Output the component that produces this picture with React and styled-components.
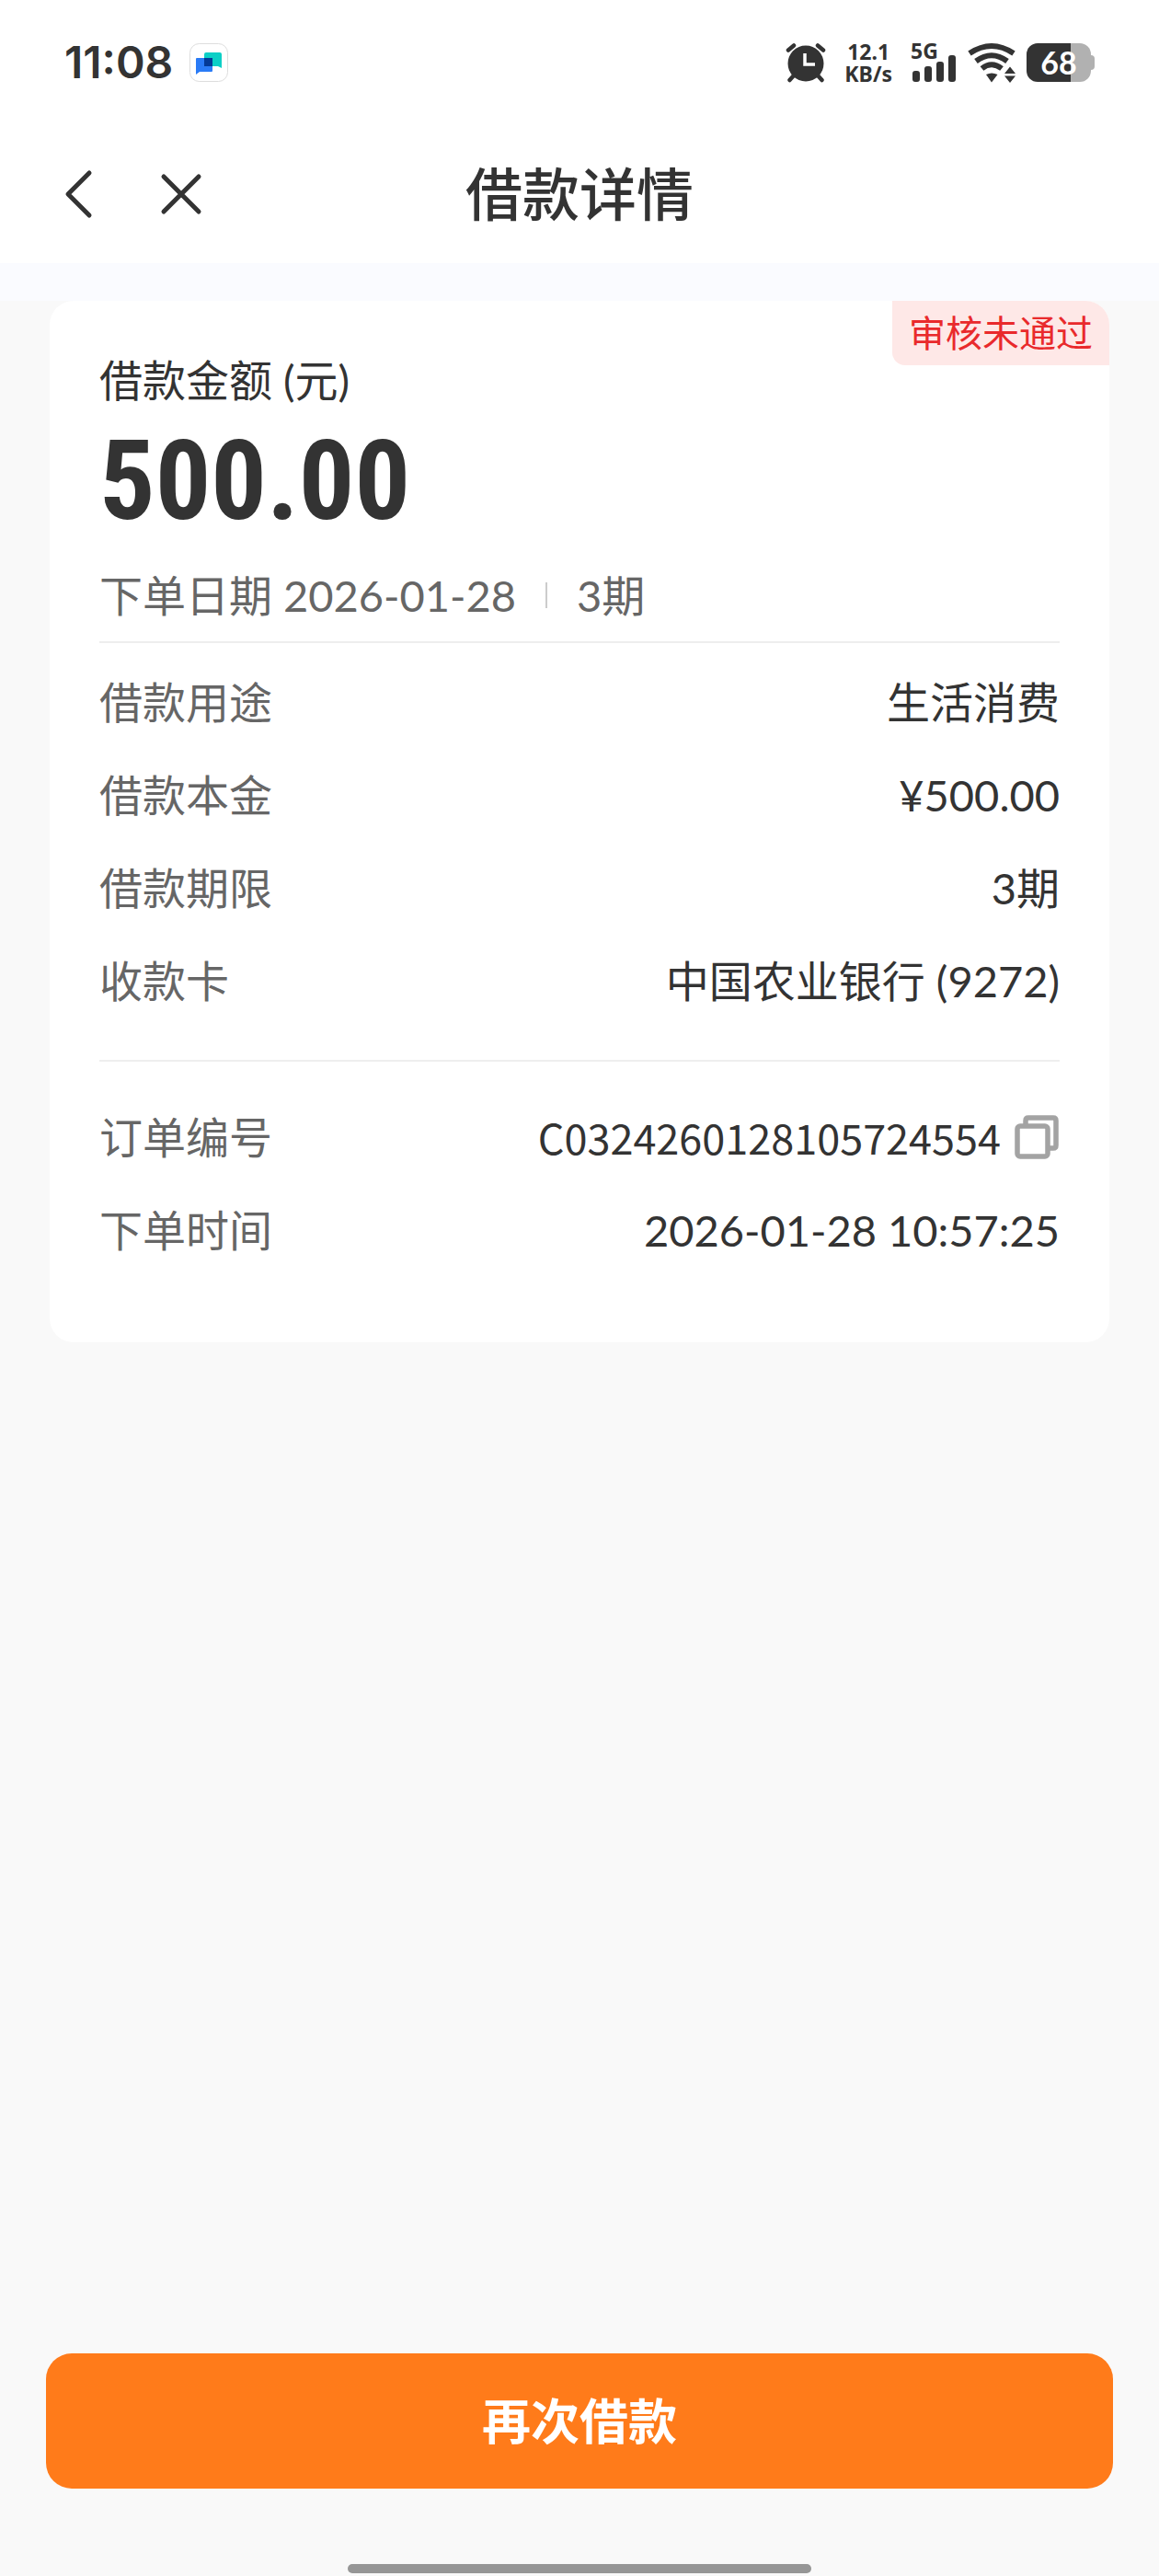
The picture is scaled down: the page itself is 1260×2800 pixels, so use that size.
import React, { useState } from "react"
import styled, { createGlobalStyle } from "styled-components"

const GlobalStyle = createGlobalStyle`
    * {
        box-sizing: border-box;
    }
    body {
        margin: 0;
        background-color: #f9f9f9;
        color: #333;
        font-family: Lato, "Noto Sans CJK SC", sans-serif;
        font-size: 47px;
        line-height: 60px;
    }
    button {
        border: none;
        padding: 0;
        background: none;
        color: inherit;
        font: inherit;
        cursor: pointer;
    }
    svg {
        display: block;
    }
`
const Page = styled.div`
    display: flex;
    flex-direction: column;
    min-height: 100vh;
`
const StatusBar = styled.div`
    display: flex;
    align-items: center;
    justify-content: space-between;
    height: 136px;
    padding: 0 70px;
    background-color: white;
`
const StatusGroup = styled.div`
    display: flex;
    align-items: center;
    gap: ${(props) => props.$gap}px;
`
const Clock = styled.span`
    font-family: Inter, sans-serif;
    font-size: 48px;
    font-weight: 600;
`
const NetSpeed = styled.div`
    display: flex;
    flex-direction: column;
    margin: 0 8px;
    font-family: "Noto Sans", sans-serif;
    font-size: 23px;
    font-weight: 700;
    line-height: 24px;
    text-align: center;
`
const Signal = styled.div`
    display: grid;
    height: 44px;

    > * {
        grid-area: 1 / 1;
    }
    > svg {
        align-self: end;
    }
`
const NetworkType = styled.span`
    font-family: "Noto Sans", sans-serif;
    font-size: 23px;
    font-weight: 700;
    line-height: 18px;
`
const Battery = styled.div`
    display: flex;
    align-items: center;

    &::after {
        content: "";
        width: 4px;
        height: 16px;
        border-radius: 0 4px 4px 0;
        background-color: #b1b1b1;
    }
`
const BatteryLevel = styled.span`
    width: 70px;
    border-radius: 12px;
    background: linear-gradient(to right, #333 ${(props) => props.$level}%, #b1b1b1 0);
    color: white;
    font-size: 34px;
    font-weight: 700;
    line-height: 42px;
    text-align: center;
`
const NavBar = styled.header`
    display: grid;
    grid-template-columns: 1fr auto 1fr;
    align-items: center;
    height: 150px;
    padding: 0 64px;
    background-color: white;
`
const NavActions = styled.div`
    display: flex;
    gap: 60px;
`
const Title = styled.h1`
    margin: 0;
    font-size: 62px;
    font-weight: 500;
    line-height: 80px;
`
const Strip = styled.div`
    height: 41px;
    background-color: #fafbff;
`
const Card = styled.section`
    position: relative;
    margin: 0 54px;
    padding: 56px 54px 92px;
    border-radius: 26px;
    background-color: white;
`
const Badge = styled.span`
    position: absolute;
    top: 0;
    right: 0;
    padding: 5px 18px;
    border-radius: 0 26px 0 14px;
    background-color: #fee8e7;
    color: #e92a2c;
    font-size: 40px;
`
const Amount = styled.div`
    font-family: "Roboto Condensed", Roboto, sans-serif;
    font-size: 120px;
    font-weight: 700;
    line-height: 160px;
`
const Summary = styled.div`
    display: flex;
    align-items: center;
    color: #666;
    padding: 14px 0 20px;
`
const Separator = styled.span`
    width: 2px;
    height: 28px;
    margin: 0 32px;
    background-color: #ccc;
`
const List = styled.dl`
    display: flex;
    flex-direction: column;
    gap: 41px;
    margin: 0;
    padding: ${(props) => props.$space};
    border-top: 2px solid #eee;
`
const Row = styled.div`
    display: flex;
    justify-content: space-between;
`
const Label = styled.dt`
    color: #666;
`
const Value = styled.dd`
    display: flex;
    align-items: center;
    gap: 14px;
    margin: 0;
`
const OrderNo = styled.span`
    font-family: "Noto Sans CJK SC", sans-serif;
    font-size: 45px;
`
const Footer = styled.footer`
    display: flex;
    flex-direction: column;
    align-items: center;
    gap: 82px;
    margin-top: auto;
    padding: 0 50px 3px;
`
const SubmitButton = styled.button`
    width: 100%;
    height: 147px;
    border-radius: 28px;
    background-color: #ff7b1a;
    color: white;
    font-size: 53px;
    font-weight: 700;
`
const HomeIndicator = styled.div`
    width: 504px;
    max-width: 60%;
    height: 10px;
    border-radius: 5px;
    background-color: #969696;
`

const ChatIcon = () => (
    <svg width="42" height="42" viewBox="0 0 42 42">
        <rect x="0.5" y="0.5" width="41" height="41" rx="10" fill="#fff" stroke="#ddd" />
        <path d="M18 10h15q2 0 2 2v15l-4-2H16V12q0-2 2-2z" fill="#0ccfc6" />
        <path d="M8 16h17v14q0 1-1 1H11l-4 3V17q0-1 1-1z" fill="#2a7bf6" />
        <path d="M16 16h9v9h-9z" fill="#043a96" />
    </svg>
)

const AlarmIcon = () => (
    <svg width="44" height="44" viewBox="0 0 44 44">
        <circle cx="22" cy="23" r="19.5" fill="#333" />
        <g stroke="#333" strokeWidth="4.5" strokeLinecap="round">
            <path d="M3 8.5l6-5M41 8.5l-6-5M9 36l-4.5 5M35 36l4.5 5" />
        </g>
        <path d="M21 12v12h11" fill="none" stroke="#fff" strokeWidth="3.5" />
    </svg>
)

const SignalBars = () => (
    <svg width="50" height="30" viewBox="0 0 50 30">
        <g fill="#333">
            <rect x="2" y="17" width="8" height="12" rx="3" />
            <rect x="15" y="12" width="8" height="17" rx="3" />
            <rect x="28" y="7" width="8" height="22" rx="3" />
            <rect x="41" y="0" width="8" height="29" rx="3" />
        </g>
    </svg>
)

const WifiIcon = () => (
    <svg width="52" height="44" viewBox="0 0 52 44">
        <g fill="none" stroke="#333" strokeWidth="6">
            <path d="M2 12Q26 -4 50 12M9 20.5Q26 8 43 20.5M15.5 28.5Q26 20 37 28.5" />
        </g>
        <path d="M20 35q6-3 12.5 0L26 43.5z" fill="#333" />
        <path d="M40 34l6-7.5 6 7.5zM40 36.5h12l-6 7.5z" fill="#333" />
    </svg>
)

const BackIcon = () => (
    <svg width="42" height="60" viewBox="0 0 42 60">
        <path d="M33 7L10 30l23 23" fill="none" stroke="#333" strokeWidth="5" strokeLinecap="round" strokeLinejoin="round" />
    </svg>
)

const CloseIcon = () => (
    <svg width="60" height="60" viewBox="0 0 60 60">
        <path d="M12 11l38 38M50 11L12 49" stroke="#333" strokeWidth="5" strokeLinecap="round" />
    </svg>
)

const CopyIcon = () => (
    <svg width="50" height="50" viewBox="0 0 50 50">
        <g fill="none" stroke="#a3a3a3" strokeWidth="5.5" strokeLinejoin="round">
            <rect x="4" y="13" width="33" height="33" rx="3" />
            <path d="M13 12V7q0-3 3-3h27q3 0 3 3v27q0 3-3 3h-5" />
        </g>
    </svg>
)

const loanInfo = [
    { label: "借款用途", value: "生活消费" },
    { label: "借款本金", value: "¥500.00" },
    { label: "借款期限", value: "3期" },
    { label: "收款卡", value: "中国农业银行 (9272)" },
]
const orderNo = "C0324260128105724554"
const batteryLevel = 68

function App() {
    const [copied, setCopied] = useState(false)
    const copyOrderNo = () => {
        navigator.clipboard?.writeText(orderNo)
        setCopied(true)
    }
    return (
        <Page>
            <GlobalStyle />
            <StatusBar>
                <StatusGroup $gap={18}>
                    <Clock>11:08</Clock>
                    <ChatIcon />
                </StatusGroup>
                <StatusGroup $gap={12}>
                    <AlarmIcon />
                    <NetSpeed>
                        <span>12.1</span>
                        <span>KB/s</span>
                    </NetSpeed>
                    <Signal>
                        <NetworkType>5G</NetworkType>
                        <SignalBars />
                    </Signal>
                    <WifiIcon />
                    <Battery>
                        <BatteryLevel $level={batteryLevel}>{batteryLevel}</BatteryLevel>
                    </Battery>
                </StatusGroup>
            </StatusBar>
            <NavBar>
                <NavActions>
                    <button type="button" aria-label="返回">
                        <BackIcon />
                    </button>
                    <button type="button" aria-label="关闭">
                        <CloseIcon />
                    </button>
                </NavActions>
                <Title>借款详情</Title>
            </NavBar>
            <Strip />
            <Card>
                <Badge>审核未通过</Badge>
                <div>借款金额 (元)</div>
                <Amount>500.00</Amount>
                <Summary>
                    下单日期 2026-01-28
                    <Separator />
                    3期
                </Summary>
                <List $space="34px 0 56px">
                    {loanInfo.map((item) => (
                        <Row key={item.label}>
                            <Label>{item.label}</Label>
                            <Value>{item.value}</Value>
                        </Row>
                    ))}
                </List>
                <List $space="52px 0 0">
                    <Row>
                        <Label>订单编号</Label>
                        <Value>
                            <OrderNo>{orderNo}</OrderNo>
                            <button type="button" aria-label={copied ? "已复制" : "复制订单编号"} onClick={copyOrderNo}>
                                <CopyIcon />
                            </button>
                        </Value>
                    </Row>
                    <Row>
                        <Label>下单时间</Label>
                        <Value>2026-01-28 10:57:25</Value>
                    </Row>
                </List>
            </Card>
            <Footer>
                <SubmitButton type="button">再次借款</SubmitButton>
                <HomeIndicator />
            </Footer>
        </Page>
    )
}

export default App
